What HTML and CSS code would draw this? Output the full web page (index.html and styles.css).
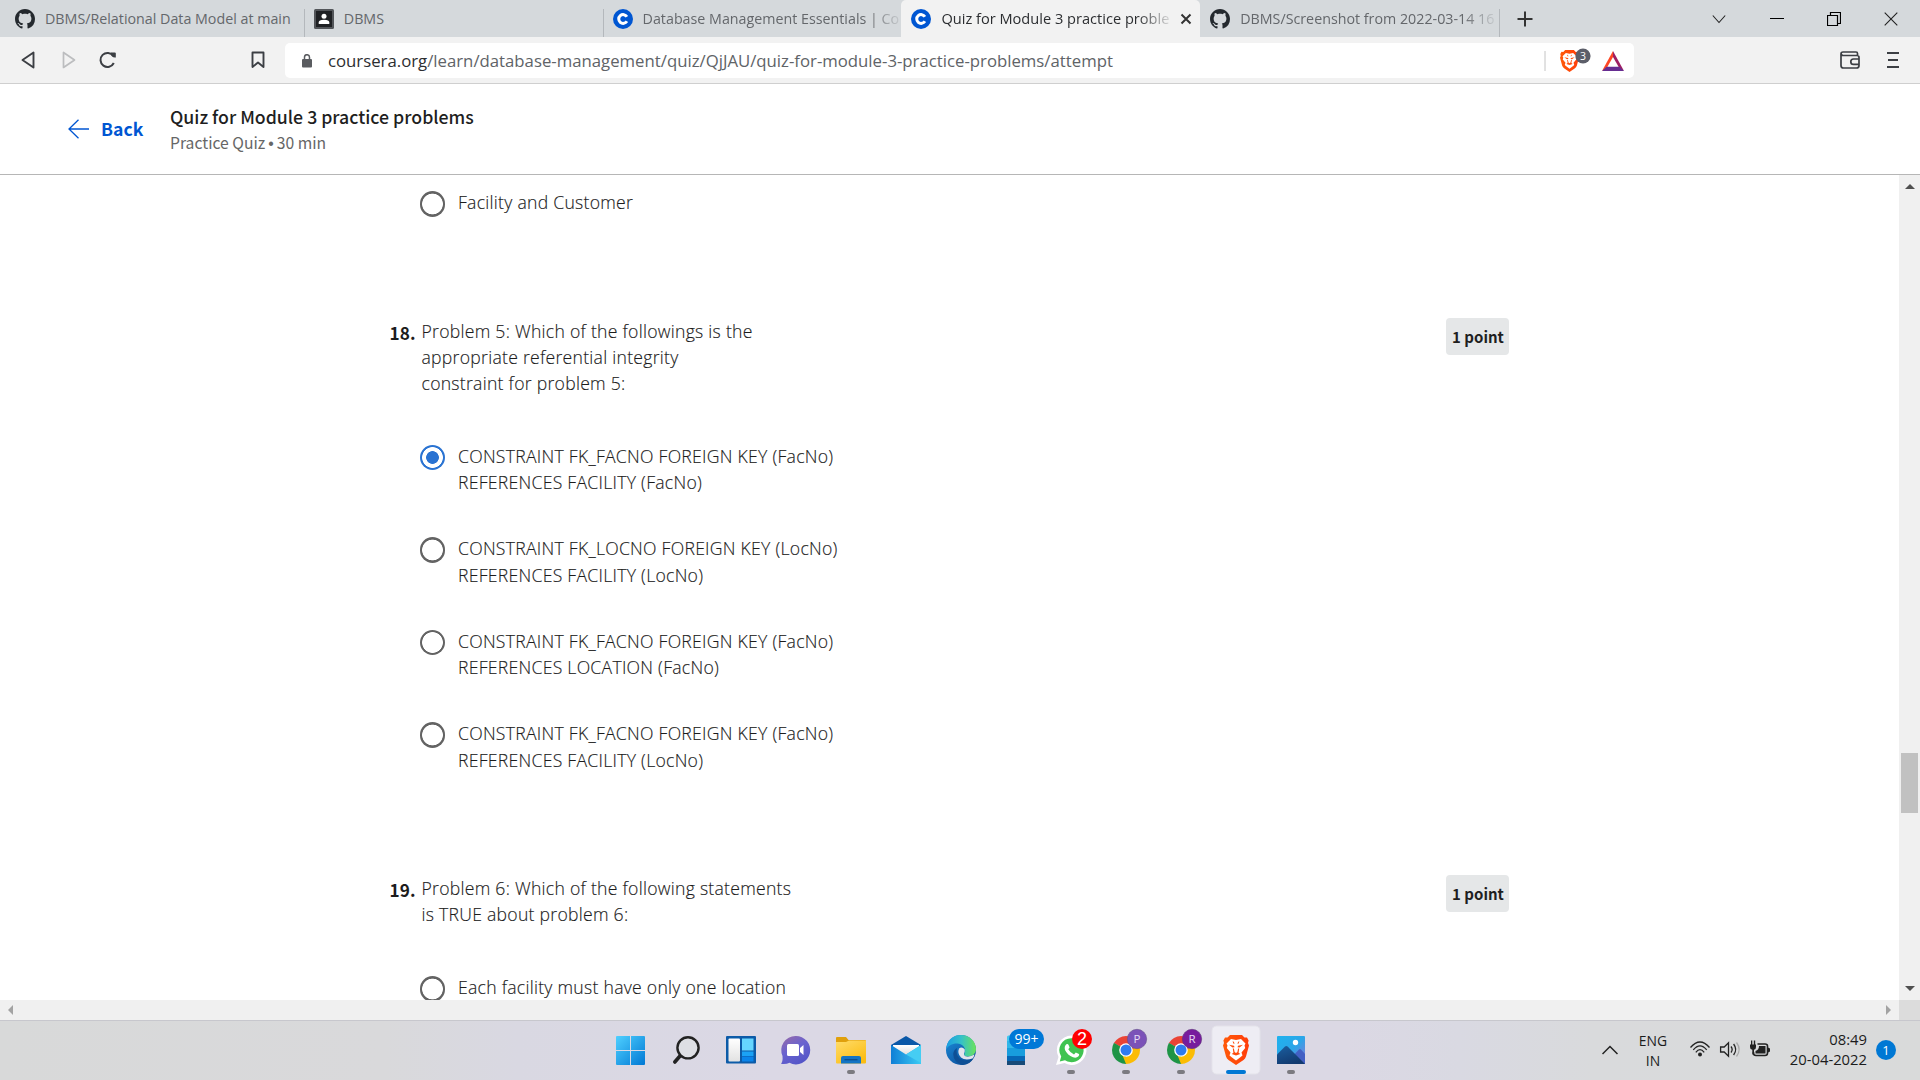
FILE: index.html
```html
<!DOCTYPE html>
<html lang="en">
<head>
<meta charset="utf-8">
<title>Quiz for Module 3 practice problems</title>
<link rel="stylesheet" href="styles.css">
</head>
<body>
<svg class="defs" width="0" height="0">
  <defs>
    <symbol id="github" viewBox="0 0 16 16"><path fill="#24292e" d="M8 0C3.58 0 0 3.58 0 8c0 3.54 2.29 6.53 5.47 7.59.4.07.55-.17.55-.38 0-.19-.01-.82-.01-1.49-2.01.37-2.53-.49-2.69-.94-.09-.23-.48-.94-.82-1.13-.28-.15-.68-.52-.01-.53.63-.01 1.08.58 1.23.82.72 1.21 1.87.87 2.33.66.07-.52.28-.87.51-1.07-1.78-.2-3.64-.89-3.64-3.95 0-.87.31-1.59.82-2.15-.08-.2-.36-1.02.08-2.12 0 0 .67-.21 2.2.82.64-.18 1.32-.27 2-.27s1.36.09 2 .27c1.53-1.04 2.2-.82 2.2-.82.44 1.1.16 1.92.08 2.12.51.56.82 1.27.82 2.15 0 3.07-1.87 3.75-3.65 3.95.29.25.54.73.54 1.48 0 1.07-.01 1.93-.01 2.2 0 .21.15.46.55.38A8.01 8.01 0 0 0 16 8c0-4.42-3.58-8-8-8z"/></symbol>
    <symbol id="coursera" viewBox="0 0 20 20"><circle cx="10" cy="10" r="10" fill="#0056d2"/><path d="M13.9 7.7A4.4 4.4 0 1 0 13.9 12.3" fill="none" stroke="#fff" stroke-width="3"/></symbol>
    <symbol id="lion" viewBox="0 0 26 30">
      <path fill="url(#braveFill)" d="M7 0H19L21.500 2.600 24 2.400 25.600 5.400 25 8 26 10.500 23 21.500Q22.300 23.500 20.500 25L13 30 5.500 25Q3.700 23.500 3 21.500L0 10.500 1 8 .4 5.400 2 2.400 4.500 2.600Z"/>
      <path fill="#fff" d="M8 4 13 5 18 4 22.500 8.500 21.500 10.500 22.200 13 18.500 17.500 19.500 20.500 17 22.500 13 25.500 9 22.500 6.500 20.500 7.500 17.500 3.800 13 4.500 10.500 3.500 8.500Z"/>
      <path fill="#ff4d0c" d="M6 9.800 11 10.800 11.500 12.200 9.500 12.600ZM20 9.800 15 10.800 14.500 12.200 16.500 12.600ZM9.800 13.500H10.900L11.600 17 13 18 14.400 17 15.100 13.500H16.200L15.600 17.800 17.300 19 13 20.600 8.700 19 10.400 17.800ZM9.500 6.500 11 6.800 11.400 9H10.800ZM16.500 6.500 15 6.800 14.600 9H15.200Z"/>
    </symbol>
    <symbol id="chrome" viewBox="0 0 28 28">
      <path fill="#ea4335" d="M14 14 1.880 7A14 14 0 0 1 26.120 7Z"/>
      <path fill="#fbbc04" d="M14 14 26.120 7A14 14 0 0 1 14 28Z"/>
      <path fill="#1e9446" d="M14 14 14 28A14 14 0 0 1 1.880 7Z"/>
      <path fill="#ea4335" d="M14 7H26.120L20 14Z"/>
      <path fill="#fbbc04" d="M20.060 10.500 20.060 17.500 14 28 10 18Z"/>
      <path fill="#1e9446" d="M1.880 7 7.940 17.500 14 21 14 14Z"/>
      <circle cx="14" cy="14" r="6.800" fill="#fff"/><circle cx="14" cy="14" r="5.500" fill="#2f7bf0"/>
    </symbol>
    <linearGradient id="braveFill"><stop stop-color="#ff5a0a"/><stop offset="1" stop-color="#ff3d0a"/></linearGradient>
    <linearGradient id="winFill" x2="1" y2="1"><stop stop-color="#4fd0ff"/><stop offset="1" stop-color="#0078d4"/></linearGradient>
    <linearGradient id="chatFill" x2=".6" y2="1"><stop stop-color="#9a6aa5"/><stop offset=".5" stop-color="#6a63cf"/><stop offset="1" stop-color="#5455c8"/></linearGradient>
    <linearGradient id="folderFill" x2=".7" y2="1"><stop stop-color="#ffdc6b"/><stop offset="1" stop-color="#fbbd12"/></linearGradient>
    <linearGradient id="mailFill" x2="1"><stop stop-color="#0f7fd6"/><stop offset="1" stop-color="#3ccbf4"/></linearGradient>
    <linearGradient id="edgeTop" x2="1"><stop stop-color="#1b9de2"/><stop offset=".5" stop-color="#35c1c8"/><stop offset="1" stop-color="#6be35a"/></linearGradient>
    <linearGradient id="edgeLow" x2=".7" y2="1"><stop stop-color="#1c8fdc"/><stop offset="1" stop-color="#0c4f9c"/></linearGradient>
    <linearGradient id="skyFill" x2="1" y2="1"><stop stop-color="#1fb2ee"/><stop offset=".5" stop-color="#2ba6e8"/><stop offset="1" stop-color="#8f74d8"/></linearGradient>
    <linearGradient id="hillFill" x2=".5" y2="1"><stop stop-color="#1b5fa0"/><stop offset="1" stop-color="#123a70"/></linearGradient>
    <linearGradient id="paper" x2="0" y2="1"><stop stop-color="#fff"/><stop offset="1" stop-color="#e2e2e2"/></linearGradient>
  </defs>
</svg>

<header class="tabs">
  <div class="tab sep"><svg class="fav"><use href="#github"/></svg><span class="label">DBMS/Relational Data Model at main</span></div>
  <div class="tab sep"><svg class="fav" viewBox="0 0 20 20"><rect width="20" height="20" rx="1.500" fill="#53565a"/><rect x="2" y="2" width="16" height="16" fill="#1f2124"/><circle cx="10" cy="7.300" r="2.500" fill="#fff"/><path d="M4.700 15v-1.500q0-2.500 5.300-2.700 5.300.2 5.300 2.700V15z" fill="#fff"/></svg><span class="label">DBMS</span></div>
  <div class="tab"><svg class="fav"><use href="#coursera"/></svg><span class="label fade">Database Management Essentials | Co</span></div>
  <div class="tab active"><svg class="fav"><use href="#coursera"/></svg><span class="label fade">Quiz for Module 3 practice proble</span>
    <svg class="close" viewBox="0 0 12 12"><path d="M1.500 1.500 10.500 10.500M10.500 1.500 1.500 10.500" stroke="#333" stroke-width="2"/></svg></div>
  <div class="tab sep"><svg class="fav"><use href="#github"/></svg><span class="label fade">DBMS/Screenshot from 2022-03-14 16</span></div>
  <svg class="plus" viewBox="0 0 16 16"><path d="M8 .5V15.500M.5 8H15.500" stroke="#333" stroke-width="2"/></svg>
  <div class="controls">
    <svg viewBox="0 0 14 14"><path d="M.8 3.500 7 10.500 13.200 3.500" fill="none" stroke="#222" stroke-width="1.100"/></svg>
    <svg viewBox="0 0 14 14"><path d="M0 6.500H14" stroke="#000"/></svg>
    <svg viewBox="0 0 14 14"><path d="M.5 3.500H10.500V13.500H.5ZM3.500 3V.5H13.500V11.500H11" fill="none" stroke="#000" stroke-width="1.200"/></svg>
    <svg viewBox="0 0 14 14"><path d="M.7.7 13.300 13.300M13.300.7.7 13.300" stroke="#222" stroke-width="1.100"/></svg>
  </div>
</header>

<nav class="toolbar">
  <svg class="tool" viewBox="0 0 20 20"><path d="M3.500 10 14.500 2.500V17.500Z" fill="none" stroke="#3c3f44" stroke-width="1.900" stroke-linejoin="round"/></svg>
  <svg class="tool" viewBox="0 0 20 20"><path d="M15.500 10 4.500 2.500V17.500Z" fill="none" stroke="#bcbdbf" stroke-width="1.700" stroke-linejoin="round"/></svg>
  <svg class="tool" viewBox="0 0 20 20"><path d="M15.800 13A7 7 0 1 1 15.300 6" fill="none" stroke="#3c3f44" stroke-width="2"/><path d="M12.800 2.500H16.800Q17.800 2.500 17.800 3.500V7.500Q13 8 12.800 2.500Z" fill="#3c3f44"/></svg>
  <svg class="tool mark" viewBox="0 0 20 20"><path d="M4.500 2.500H15.500V17L10 12.500 4.500 17Z" fill="none" stroke="#3c3f44" stroke-width="1.900" stroke-linejoin="round"/></svg>
  <div class="address">
    <svg class="lock" viewBox="0 0 10 14"><rect y="5" width="10" height="8.500" rx="1" fill="#5a5c60"/><path d="M2.500 6V3.200a2.500 2.500 0 0 1 5 0V6" fill="none" stroke="#5a5c60" stroke-width="1.500"/></svg>
    <span class="url"><b>coursera.org</b>/learn/database-management/quiz/QjJAU/quiz-for-module-3-practice-problems/attempt</span>
    <svg class="shield" viewBox="0 0 90 35">
      <path d="M1 8V28" stroke="#c4c4c4"/>
      <use href="#lion" x="16" y="6.500" width="19" height="23"/>
      <circle cx="39" cy="13" r="7.600" fill="#5c5e69"/><text x="39" y="16.700" font-size="10.500" text-anchor="middle" fill="#fff">3</text>
      <path d="M69 8 58 28 62.600 25.300 69 14Z" fill="#ff4724"/><path d="M69 8 80 28 75.400 25.300 69 14Z" fill="#9e1f63"/><path d="M58 28H80L75.400 23.800H62.600Z" fill="#662d91"/>
    </svg>
  </div>
  <svg class="wallet" viewBox="0 0 20 18"><path d="M17.500 5V2.500Q17.500 1 16 1H3Q1 1 1 3V14.500Q1 17 3.500 17H16.500Q19 17 19 14.500V6.500Q19 4.500 17 4.500H3Q1.500 4.500 1.200 3M19 8H13.500A2.700 2.700 0 0 0 13.500 13.400H19" fill="none" stroke="#3c3f44" stroke-width="1.700"/></svg>
  <svg class="menu" viewBox="0 0 12 16"><path d="M0 1H12M1 8H11M0 15H12" stroke="#3c3f44" stroke-width="2"/></svg>
</nav>

<section class="quizbar">
  <svg class="arrow" viewBox="0 0 21 20"><path d="M10.500.7 1 10 10.500 19.300M1 10H21" fill="none" stroke="#0056d2" stroke-width="1.300"/></svg>
  <span class="back">Back</span>
  <div class="heading"><h1>Quiz for Module 3 practice problems</h1><p>Practice Quiz<span class="bullet">•</span>30 min</p></div>
</section>

<main class="view">
  <div class="quiz">
    <div class="question">
      <div class="option"><i class="radio"></i><span>Facility and Customer</span></div>
    </div>
    <div class="question">
      <div class="head"><span class="num">18.</span><p>Problem 5: Which of the followings is the<br>appropriate referential integrity<br>constraint for problem 5:</p><span class="points">1 point</span></div>
      <div class="option"><i class="radio on"></i><span>CONSTRAINT FK_FACNO FOREIGN KEY (FacNo)<br>REFERENCES FACILITY (FacNo)</span></div>
      <div class="option"><i class="radio"></i><span>CONSTRAINT FK_LOCNO FOREIGN KEY (LocNo)<br>REFERENCES FACILITY (LocNo)</span></div>
      <div class="option"><i class="radio"></i><span>CONSTRAINT FK_FACNO FOREIGN KEY (FacNo)<br>REFERENCES LOCATION (FacNo)</span></div>
      <div class="option"><i class="radio"></i><span>CONSTRAINT FK_FACNO FOREIGN KEY (FacNo)<br>REFERENCES FACILITY (LocNo)</span></div>
    </div>
    <div class="question">
      <div class="head"><span class="num">19.</span><p>Problem 6: Which of the following statements<br>is TRUE about problem 6:</p><span class="points">1 point</span></div>
      <div class="option"><i class="radio"></i><span>Each facility must have only one location</span></div>
    </div>
  </div>
  <div class="vbar">
    <svg viewBox="0 0 10 5"><path d="M0 5 5 0 10 5Z" fill="#505050"/></svg>
    <div class="thumb"></div>
    <svg viewBox="0 0 10 5"><path d="M0 0 5 5 10 0Z" fill="#505050"/></svg>
  </div>
</main>
<div class="hbar">
  <div class="track"><svg viewBox="0 0 5 10"><path d="M5 0 0 5 5 10Z" fill="#a3a3a3"/></svg><svg viewBox="0 0 5 10"><path d="M0 0 5 5 0 10Z" fill="#a3a3a3"/></svg></div>
</div>

<footer class="taskbar">
  <div class="apps">
    <svg viewBox="0 0 55 60"><path fill="url(#winFill)" d="M14 16H27V30H13V17Q13 16 14 16ZM28 16H41Q42 16 42 17V30H28ZM13 31H27V45H14Q13 45 13 44ZM28 31H42V44Q42 45 41 45H28Z"/></svg>
    <svg viewBox="0 0 55 60"><circle cx="30" cy="27.800" r="10.600" fill="#dedfe4" stroke="#222" stroke-width="2.400"/><path d="M22 36 16.800 42" stroke="#222" stroke-width="3.600" stroke-linecap="round"/></svg>
    <svg viewBox="0 0 55 60"><rect x="13" y="16" width="30" height="27.500" rx="1" fill="#0c5ba8"/><rect x="15.500" y="18.500" width="11.500" height="23" rx="1" fill="url(#paper)"/><path d="M29 18.500H40.500V30.500H29Z" fill="#66d6ff"/><path d="M29 31.500H40.500V36H29Z" fill="#1ba2f5"/><path d="M29 36.500H40.500V41.500H29Z" fill="#0a84ea"/></svg>
    <svg viewBox="0 0 55 60"><path fill="url(#chatFill)" d="M27.500 16A14.200 14.200 0 1 1 21.500 42.800Q18 44.500 13 43.800 15 41.500 14.500 36A14.200 14.200 0 0 1 27.500 16Z"/><rect x="19" y="24" width="12" height="12" rx="1.500" fill="#fff"/><path d="M32 28 35.500 25V35L32 32Z" fill="#fff"/></svg>
    <svg viewBox="0 0 55 60"><path d="M13 18Q13 17 14 17H23L25.500 20H42Q43 20 43 21V26H13Z" fill="#e0a00c"/><path d="M13 22H23L26 20.500H43V42.500Q43 43.500 42 43.500H14Q13 43.500 13 42.500Z" fill="url(#folderFill)"/><path d="M18 43.500V38Q18 36 20 36H36Q38 36 38 38V43.500Z" fill="#1374c4"/><path d="M21.500 39.700H34.500" stroke="#0b4d8e" stroke-width="1.300"/><rect class="dot" x="24" y="50" width="8" height="4" rx="2"/></svg>
    <svg viewBox="0 0 55 60"><path d="M13 25 28 16 43 25V31H13Z" fill="#0a58a8"/><path d="M15 25H41V34H15Z" fill="url(#paper)"/><path d="M13 25 28 34.500 43 25V44H13Z" fill="url(#mailFill)"/><path d="M28 34.500 43 25V43Z" fill="#45cdf3"/></svg>
    <svg viewBox="0 0 55 60"><circle cx="28" cy="30" r="15" fill="url(#edgeLow)"/><path d="M13.500 27C15 18 22 15 28 15 36 15 43 21 43 29 43 34 39 36.500 35 36.500 32 36.500 30.500 35 31.500 33.500 33 31 32 24 24.500 23.500 19 23.300 15 26 13.500 29Z" fill="url(#edgeTop)"/><path d="M24 28Q22.500 34 26.500 38.500 31.500 42.500 40.500 38.500 36 45.500 29 45 20.500 42 20.200 34 20.500 30 24 28Z" fill="#0e4f95"/><path d="M31.800 29.500Q32 31.800 31 33.500 30.300 35.200 32.500 36.300 36.500 37.500 41.500 34.500 40.800 37.500 39.500 38.500 32 41 28 37.500 24 33.500 26 28.500 29 26 31.800 29.500Z" fill="#e3e3ec"/></svg>
    <svg viewBox="0 0 55 60"><path d="M19 17Q19 15.500 20.500 15.500H37V24H19Z" fill="#43c7ee"/><path d="M19 21H37V31H19Z" fill="#30b6e8"/><path d="M19 28H37V36H19Z" fill="#189ddd"/><path d="M19 36H37V41H19Z" fill="#0767b5"/><path d="M19 41H37V45H19Z" fill="#174a78"/><rect x="21" y="9" width="35" height="20" rx="10" fill="#0078d7"/><text x="38.500" y="24.300" text-anchor="middle" font-size="14" fill="#fff">99+</text></svg>
    <svg viewBox="0 0 55 60"><path d="M28.500 15.500A14.700 14.700 0 1 1 21.500 43L13 45 15.500 37A14.700 14.700 0 0 1 28.500 15.500Z" fill="#fff"/><path d="M28.500 18.200A12 12 0 1 1 22 40.200L16.800 41.500 18.200 36.600A12 12 0 0 1 28.500 18.200Z" fill="#40c351"/><path d="M23.300 24.300Q24.800 23.200 25.600 25L26.600 27.400 25.300 29.300Q27.300 33 31 34.400L32.800 32.500 36 34Q36.500 34.800 35.500 36.200 33.300 38.500 30 37.200 24.500 35.200 22 30 21 26.500 23.300 24.300Z" fill="#fff"/><circle cx="39" cy="19" r="10" fill="#f00"/><text x="39" y="25.200" text-anchor="middle" font-size="18" class="arial" fill="#fff">2</text><rect class="dot" x="24" y="50" width="8" height="4" rx="2"/></svg>
    <svg viewBox="0 0 55 60"><use href="#chrome" x="14" y="16" width="28" height="28"/><circle cx="39" cy="19" r="9.700" fill="#7b52b8" stroke="#66518c" stroke-width=".6"/><text x="39" y="23" text-anchor="middle" font-size="11.500" fill="#e6dcf5">P</text><rect class="dot" x="24" y="50" width="8" height="4" rx="2"/></svg>
    <svg viewBox="0 0 55 60"><use href="#chrome" x="14" y="16" width="28" height="28"/><circle cx="39" cy="19" r="9.700" fill="#771c9d" stroke="#5e347a" stroke-width=".6"/><text x="39" y="23" text-anchor="middle" font-size="11.500" fill="#e6dcf5">R</text><rect class="dot" x="24" y="50" width="8" height="4" rx="2"/></svg>
    <svg viewBox="0 0 55 60"><rect x="4" y="6" width="48" height="48" rx="4.500" fill="#eeedf4" stroke="#e4e3ea"/><use href="#lion" x="15" y="15" width="26" height="30"/><rect x="18" y="50" width="20" height="4" rx="2" fill="#0078d4"/></svg>
    <svg viewBox="0 0 55 60"><rect x="14" y="16" width="28" height="28" rx="1" fill="url(#skyFill)"/><path d="M28 38 36 29.500Q37 28.500 38 29.500L42 34V44H28Z" fill="#4360c4"/><path d="M14 34.500 22 26.500Q23.300 25.500 24.600 26.500L42 44H14Z" fill="url(#hillFill)"/><circle cx="32.500" cy="22.500" r="2.700" fill="#fff"/><rect class="dot" x="24" y="50" width="8" height="4" rx="2"/></svg>
  </div>
  <div class="tray">
    <svg class="up" viewBox="0 0 16 10"><path d="M.5 9 8 1.500 15.500 9" fill="none" stroke="#222" stroke-width="1.500"/></svg>
    <div class="lang">ENG<br>IN</div>
    <svg class="status" viewBox="0 0 82 20"><g fill="none" stroke="#222" stroke-width="1.300"><path d="M.5 7.500Q10-3.500 19.500 7.500M3.300 9.800Q10 1.800 16.700 9.800M5.800 12.300Q10 7 14.200 12.300"/><path d="M30.600 7H34.200L38.500 2.800V16.200L34.200 12H30.600ZM41 6.500Q43.300 9.500 41 12.500M43.600 4Q47.800 9.500 43.600 15"/><path d="M46.500 2.500Q51.800 9.500 46.500 16.500" stroke="#aaa"/><path d="M67.500 4H75Q77.500 4 77.500 6V13Q77.500 15.500 75 15.500H66Q63.500 15.500 63.500 13V12" stroke-width="1.600"/></g><circle cx="10" cy="14.500" r="2" fill="#222"/><path d="M69 6H75.500V13.500H65.500V11Q69 10 69 6ZM78 7.500 80 8.500V11.500L78 12.500ZM60 4.500H66V7Q66 9.500 64 9.800V14.500H62.300V9.800Q60 9.500 60 7ZM61 .5H62.300V5H61ZM63.800.5H65.200V5H63.800Z" fill="#222"/></svg>
    <div class="clock">08:49<br>20-04-2022</div>
    <div class="bell">1</div>
  </div>
</footer>
</body>
</html>
```
FILE: styles.css
```css
* { box-sizing: border-box; margin: 0; padding: 0; }
body { width: 1920px; height: 1080px; overflow: hidden; display: flex; flex-direction: column; background: #fff; font-family: "Open Sans", sans-serif; color: #1f1f1f; }
svg { display: block; flex: none; }
svg text { font-family: "Open Sans", sans-serif; }
svg text.arial { font-family: "Liberation Sans", sans-serif; }
.defs { height: 0; }

.tabs { height: 37px; flex: none; display: flex; align-items: stretch; background: #d5d9dc; padding-left: 5px; }
.tab { width: 298.8px; flex: none; display: flex; align-items: center; padding: 0 10px; position: relative; }
.sep::after { content: ""; position: absolute; right: -1px; top: 9px; bottom: 0; width: 1px; background: #b4b8bc; }
.fav { width: 20px; height: 20px; margin-right: 10px; }
.label { white-space: nowrap; font-size: 14.28px; line-height: 36px; color: #64676b; }
.fade { mask-image: linear-gradient(90deg, #000 calc(100% - 32px), rgba(0, 0, 0, .15)); }
.active { background: #f2f2f2; border-radius: 5px 5px 0 0; }
.active .label { margin-top: -2px; font-size: 14.6px; color: #2c2e31; }
.close { width: 12px; height: 12px; margin: 0 -2px 0 auto; }
.plus { width: 16px; height: 16px; margin: 11px 0 0 18px; }
.controls { margin: 12px 22px 0 auto; display: flex; gap: 43.2px; }
.controls svg { width: 14px; height: 14px; }

.toolbar { height: 47px; flex: none; background: #f2f2f2; border-bottom: 1px solid #cfcfcf; display: flex; align-items: center; padding: 0 21px 0 19px; }
.tool { width: 20px; height: 20px; margin-right: 20px; }
.tool:nth-child(3) { margin-left: -1px; }
.mark { margin: 0 17px 0 110px; }
.address { width: 1349px; height: 35px; margin: 1px auto 0 0; background: #fff; border-radius: 5px; display: flex; align-items: center; }
.lock { width: 10px; height: 14px; margin: 0 16px 0 17px; }
.url { font-size: 16.75px; line-height: 34px; color: #606367; }
.url b { font-weight: 400; color: #2c2e31; }
.shield { width: 90px; height: 35px; margin-left: auto; }
.wallet { width: 20px; height: 18px; margin-right: 27px; }
.menu { width: 12px; height: 16px; }

.quizbar { height: 91px; flex: none; border-bottom: 1px solid #b6b6b6; padding-left: 67.500px; display: flex; font-family: "Noto Sans CJK SC", sans-serif; }
.arrow { width: 21px; height: 20px; margin: 35px 12.500px 0 0; }
.back { width: 69px; margin-top: 32px; font-weight: 700; font-size: 17.6px; line-height: 26px; color: #0056d2; }
.heading h1 { margin-top: 19px; font-weight: 500; font-size: 17.72px; line-height: 26px; color: #1f1f1f; }
.heading p { margin-top: 2px; font-size: 15.7px; line-height: 24px; color: #666; }
.bullet { margin: 0 3px; font-family: "Liberation Sans", sans-serif; }

.view { height: 825px; flex: none; display: flex; overflow: hidden; }
.quiz { flex: 1; height: 825px; overflow: hidden; padding: 14px 390px 0 389px; font-size: 17.6px; font-weight: 300; letter-spacing: .27px; line-height: 26.250px; color: #1c1c1c; -webkit-text-stroke: .15px #1c1c1c; }
.question { margin-bottom: 102.250px; }
.head { display: flex; align-items: flex-start; margin-bottom: 46.500px; }
.num { width: 32.500px; padding: 2px 0 0 .6px; font: 700 17.2px/26px "Noto Sans CJK SC", sans-serif; letter-spacing: 0; -webkit-text-stroke: 0; }
.points { margin-left: auto; width: 63px; height: 37px; padding-left: 1px; background: #e5e7e8; border-radius: 4px; text-align: center; font: 700 15px/37px "Noto Sans CJK SC", sans-serif; letter-spacing: 0; color: #1f1f1f; -webkit-text-stroke: 0; }
.option { display: flex; padding-left: 30.500px; gap: 13px; margin-bottom: 40px; }
.option:last-child { margin-bottom: 0; }
.radio { width: 25.500px; height: 25.500px; flex: none; margin: 2px 0 -4px; border-radius: 50%; background: radial-gradient(circle, #fff 10px, #636363 10.700px); }
.on { background: radial-gradient(circle, #2a73d2 6px, #fff 6.700px, #fff 10px, #2a73d2 10.700px); }
.vbar { width: 21px; background: #f0f0f0; display: flex; flex-direction: column; align-items: center; padding: 9px 0 9px; }
.vbar svg { width: 10px; height: 5px; }
.thumb { width: 17px; height: 60px; margin: 564px 0 auto; background: #c1c1c1; }
.hbar { height: 20px; flex: none; background: #dcdcdc; }
.track { width: 1899px; height: 20px; background: #f0f0f0; display: flex; justify-content: space-between; align-items: center; padding: 0 8px; }
.track svg { width: 5px; height: 10px; }

.taskbar { height: 60px; flex: none; border-top: 1px solid #c7c7cd; background: linear-gradient(90deg, #d8d9d9, #d9d9db 20%, #d9d8e2 27%, #dbd8e5 40%, #dbd8e4 70%, #d9d9e2 76%, #d9dadc 83%, #d9dada); display: flex; padding-left: 603px; }
.apps { display: flex; margin-top: -1px; }
.apps svg { width: 55px; height: 60px; overflow: visible; }
.dot { fill: #7b7a80; }
.tray { margin-left: auto; padding-right: 24px; display: flex; align-items: center; font-size: 14.8px; line-height: 20px; color: #1c1c1c; }
.up { width: 16px; height: 10px; margin-top: -1px; }
.lang { width: 70px; text-align: center; font-size: 13.9px; }
.status { width: 82px; height: 20px; margin: -1px 0 0 2px; }
.clock { width: 95px; margin-top: -3px; text-align: right; }
.bell { width: 20px; height: 20px; margin: -1px 0 0 9px; border-radius: 50%; background: #0078d4; color: #fff; font-size: 13px; text-align: center; }
```
